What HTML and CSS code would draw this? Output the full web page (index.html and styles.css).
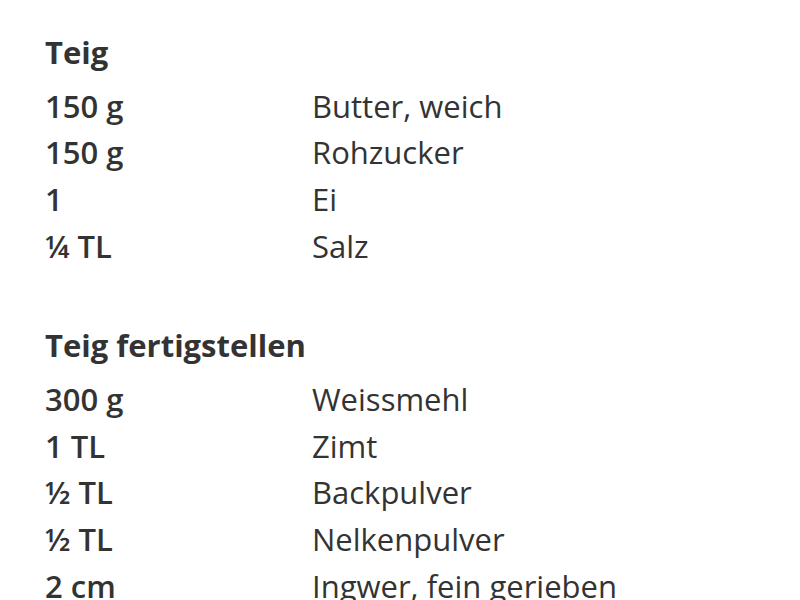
FILE: index.html
```html
<!DOCTYPE html>
<html lang="de">
<head>
<meta charset="utf-8">
<title>Zutaten</title>
<link rel="stylesheet" href="styles.css">
</head>
<body>
<div class="recipe">
  <section class="group">
    <h3 class="group-title">Teig</h3>
    <div class="list">
      <div class="amount">150 g</div><div class="name">Butter, weich</div>
      <div class="amount">150 g</div><div class="name">Rohzucker</div>
      <div class="amount">1</div><div class="name">Ei</div>
      <div class="amount">¼ TL</div><div class="name">Salz</div>
    </div>
  </section>
  <section class="group">
    <h3 class="group-title">Teig fertigstellen</h3>
    <div class="list">
      <div class="amount">300 g</div><div class="name">Weissmehl</div>
      <div class="amount">1 TL</div><div class="name">Zimt</div>
      <div class="amount">½ TL</div><div class="name">Backpulver</div>
      <div class="amount">½ TL</div><div class="name">Nelkenpulver</div>
      <div class="amount">2 cm</div><div class="name">Ingwer, fein gerieben</div>
    </div>
  </section>
</div>
</body>
</html>
```
FILE: styles.css
```css
html, body {
  margin: 0;
  padding: 0;
  background: #ffffff;
}
body {
  font-family: "Open Sans", "Liberation Sans", sans-serif;
  color: #333333;
  font-size: 31px;
  line-height: 46.67px;
}
.recipe {
  padding: 29px 45px 0 45px;
  display: flex;
  flex-direction: column;
  gap: 53px;
}
.group-title {
  margin: 0 0 7px 0;
  font-size: 31px;
  font-weight: 700;
  line-height: 46.67px;
}
.list {
  display: grid;
  grid-template-columns: 267px 1fr;
}
.amount {
  font-weight: 600;
}
.name {
  font-weight: 400;
}
```
